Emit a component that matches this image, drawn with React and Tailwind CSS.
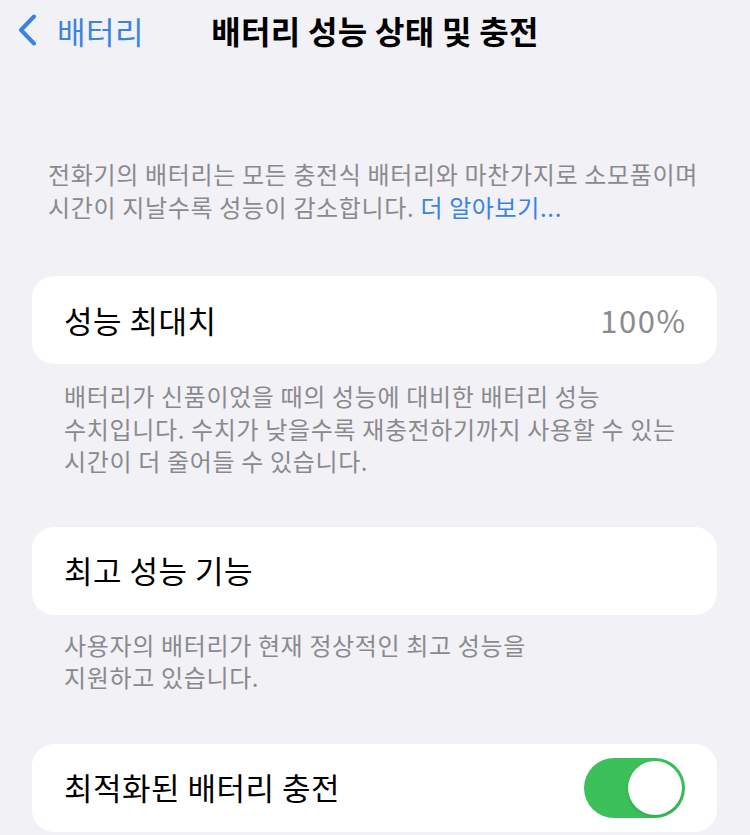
import React from "react";

const font = { fontFamily: '"Noto Sans CJK KR", "Noto Sans", sans-serif' };

function Card({ children }) {
  return (
    <div className="mx-[32px] w-[685px] h-[88px] rounded-[22px] bg-white flex items-center justify-between pl-[32px] pr-[32px]">
      {children}
    </div>
  );
}

function Note({ children, className = "" }) {
  return (
    <div className={`text-[24px] leading-[32.5px] text-[#8a8a8e] tracking-[0.65px] ${className}`}>
      {children}
    </div>
  );
}

export default function App() {
  return (
    <div className="w-[750px] h-[835px] overflow-hidden bg-[#f1f1f6]" style={font}>
      {/* navigation bar */}
      <div className="relative h-[60px] flex items-center">
        <div className="flex items-center pl-[17px] text-[#3a84e0]">
          <svg width="21" height="32" viewBox="0 0 21 32" fill="none">
            <path d="M17 2.5 L4 16 L17 29.5" stroke="currentColor" strokeWidth="4" strokeLinecap="round" strokeLinejoin="round" />
          </svg>
          <span className="ml-[19px] text-[31px] leading-none tracking-[0.5px]">배터리</span>
        </div>
        <div className="absolute inset-x-0 text-center text-[32px] font-bold leading-none text-black tracking-[0.3px] pointer-events-none">
          배터리 성능 상태 및 충전
        </div>
      </div>

      <Note className="pl-[48px] pt-[98px]">
        전화기의 배터리는 모든 충전식 배터리와 마찬가지로 소모품이며
        <br />
        시간이 지날수록 성능이 감소합니다. <span className="text-[#3a84e0]">더 알아보기...</span>
      </Note>

      <div className="mt-[53px]">
        <Card>
          <span className="text-[31px] text-black tracking-[0.5px]">성능 최대치</span>
          <span className="text-[31px] text-[#8a8a8e] tracking-[1.5px] mr-[-1.5px]">100%</span>
        </Card>
      </div>

      <Note className="pl-[64px] pt-[16px]">
        배터리가 신품이었을 때의 성능에 대비한 배터리 성능
        <br />
        수치입니다. 수치가 낮을수록 재충전하기까지 사용할 수 있는
        <br />
        시간이 더 줄어들 수 있습니다.
      </Note>

      <div className="mt-[49px]">
        <Card>
          <span className="text-[31px] text-black tracking-[0.5px]">최고 성능 기능</span>
        </Card>
      </div>

      <Note className="pl-[64px] pt-[14px]">
        사용자의 배터리가 현재 정상적인 최고 성능을
        <br />
        지원하고 있습니다.
      </Note>

      <div className="mt-[50px]">
        <Card>
          <span className="text-[31px] text-black tracking-[0.5px]">최적화된 배터리 충전</span>
          <div className="w-[101px] h-[60px] rounded-full bg-[#3cc15a] flex items-center justify-end pr-[3px]">
            <div className="w-[54px] h-[54px] rounded-full bg-white shadow-[0_2px_4px_rgba(0,0,0,0.15)]" />
          </div>
        </Card>
      </div>
    </div>
  );
}
